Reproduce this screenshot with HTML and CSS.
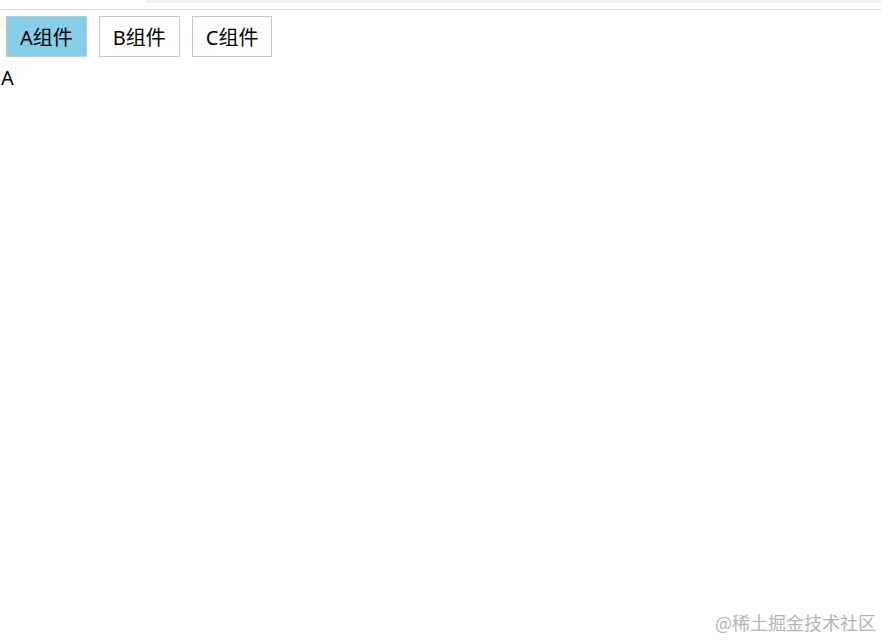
FILE: index.html
```html
<!DOCTYPE html>
<html lang="zh-CN">
<head>
    <meta charset="UTF-8">
    <title>组件切换</title>
    <link rel="stylesheet" href="styles.css">
</head>
<body>
    <div class="topbar"><div class="chrome"></div></div>
    <div class="tabs">
        <button class="tab active">A组件</button>
        <button class="tab">B组件</button>
        <button class="tab">C组件</button>
    </div>
    <div class="content">A</div>
    <div class="watermark">@稀土掘金技术社区</div>
</body>
</html>
```

FILE: styles.css
```css
body {
    margin: 0;
    font-family: "Noto Sans", "Noto Sans CJK SC", sans-serif;
    color: #000;
    background: #fff;
    height: 641px;
    position: relative;
    overflow: hidden;
}

.topbar {
    height: 9px;
    border-bottom: 1px solid #dcdcdc;
    display: flex;
    justify-content: flex-end;
}

.chrome {
    width: 736px;
    height: 3px;
    background: #f0f0f0;
}

.tabs {
    display: flex;
    gap: 12px;
    padding: 6px 0 0 6px;
}

.tab {
    height: 41px;
    padding: 0 13px;
    font-family: inherit;
    font-size: 20px;
    background: #fff;
    border: 1px solid #c8c8c8;
    color: #000;
    cursor: pointer;
}

.tab.active {
    background: #87ceeb;
}

.content {
    font-size: 20px;
    line-height: 26px;
    padding: 8px 0 0 1px;
}

.watermark {
    position: absolute;
    right: 5px;
    bottom: 6px;
    font-size: 18px;
    color: #b4b4b4;
    font-family: "Noto Sans CJK SC", sans-serif;
}
```
